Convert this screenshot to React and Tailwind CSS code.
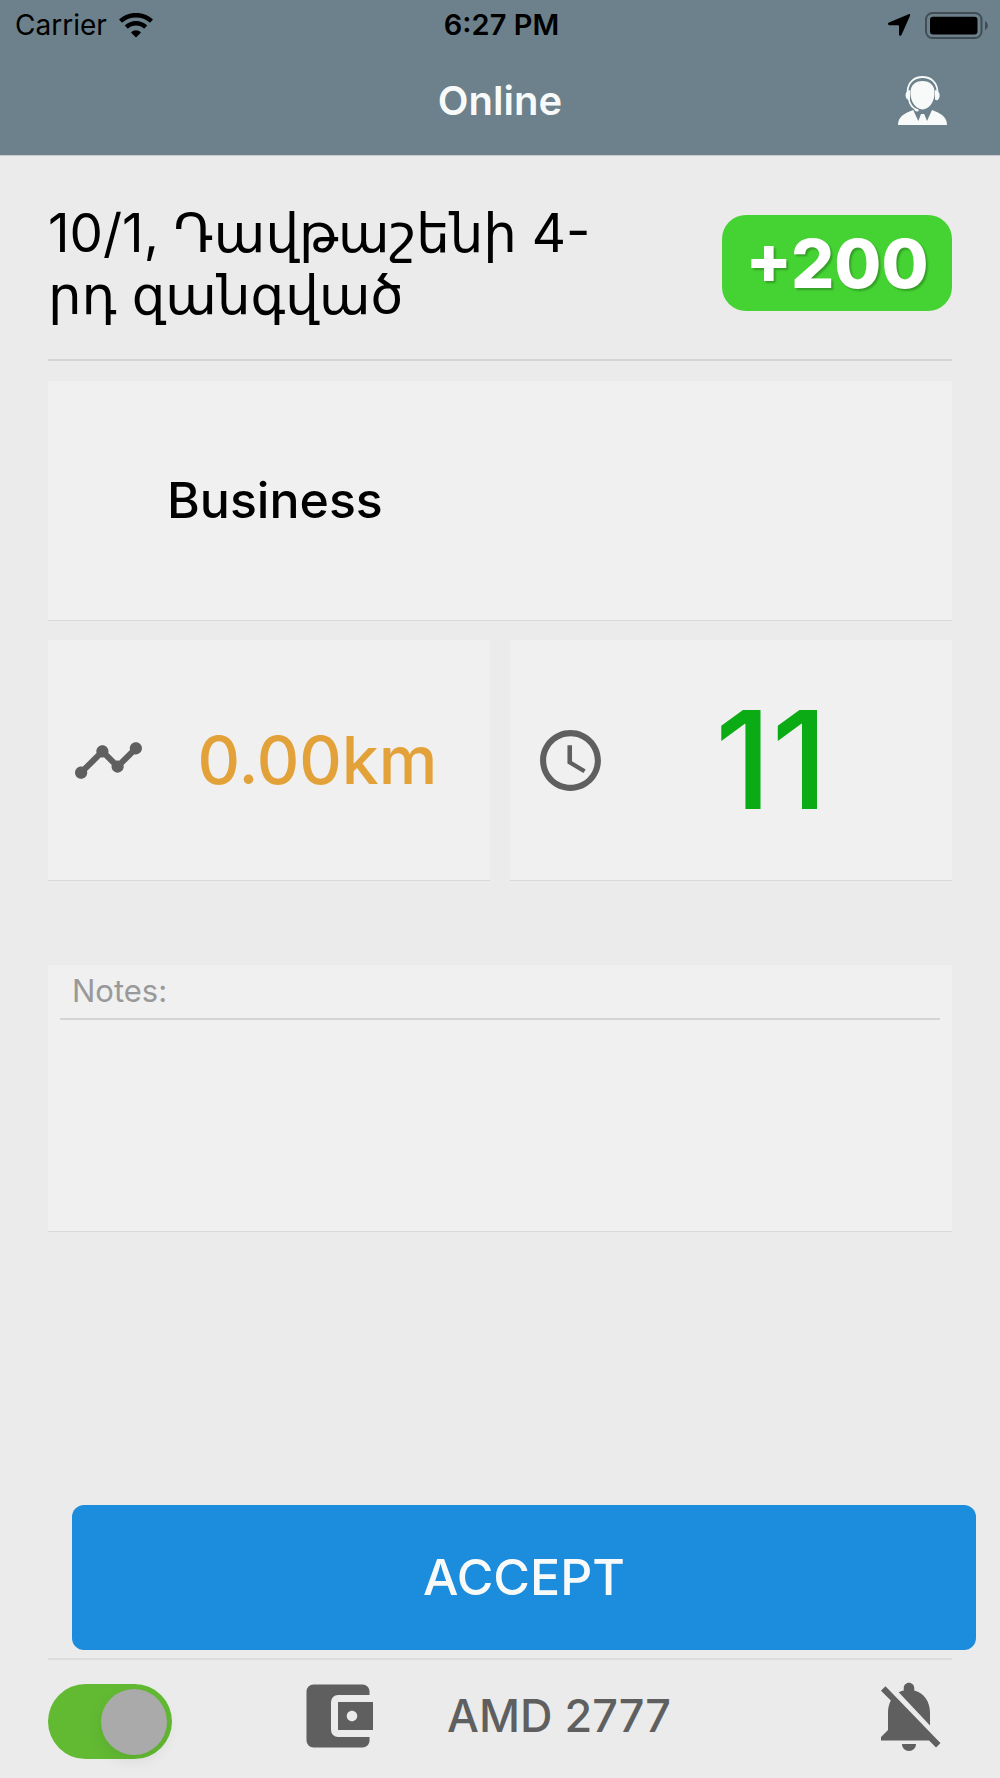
import { useState } from 'react'
import { MdAccessTime, MdAccountBalanceWallet, MdNotificationsOff, MdTimeline } from 'react-icons/md'

const WifiIcon = () => (
  <svg viewBox="0 0 34 25" className="w-[34px] h-[25px]" fill="none" stroke="currentColor" aria-hidden="true">
    <path d="M1.5 8.2C10 0.2 24 0.2 32.5 8.2" strokeWidth="4.6" />
    <path d="M7.3 14.2C12.8 9 21.2 9 26.7 14.2" strokeWidth="4.6" />
    <path d="M12 19.4C14.8 16.6 19.2 16.6 22 19.4L17 24.4Z" fill="currentColor" stroke="none" />
  </svg>
)

const LocationIcon = () => (
  <svg viewBox="0 0 24 24" className="w-6 h-6" fill="currentColor" aria-hidden="true">
    <path d="M21.6 1.2C22.8 0.7 23.5 1.5 23 2.7L14.6 21.8C14 23.2 12 23 12 21.4V12.9C12 12.4 11.8 12.2 11.3 12.2H2.4C0.7 12.2 0.4 10.2 1.9 9.6Z" />
  </svg>
)

const BatteryIcon = () => (
  <svg viewBox="0 0 63 27" className="w-[63px] h-[27px]" aria-hidden="true">
    <rect x="1" y="1" width="55.5" height="25" rx="6.5" fill="none" stroke="#414d54" strokeWidth="2" />
    <rect x="5" y="4.7" width="47.5" height="17.8" rx="3" fill="#000" />
    <path d="M60 9C61.8 10 62.8 11.5 62.8 13.5C62.8 15.5 61.8 17.2 60 18.2Z" fill="#414d54" />
  </svg>
)

const OperatorIcon = () => (
  <svg viewBox="0 0 49 49" className="w-[49px] h-[49px]" fill="currentColor" aria-hidden="true">
    <path d="M24.5 5C32 5 36.6 9.6 36.6 16.5C36.6 26 31 33.4 24.5 33.4S12.4 26 12.4 16.5C12.4 9.6 17 5 24.5 5Z" />
    <path d="M9.5 15.5C10 6.5 16 1 24.5 1S39 6.5 39.5 15.5" fill="none" stroke="currentColor" strokeWidth="1.8" />
    <path d="M12 14.2V24H10.5C8.6 23 7.6 21.5 7.6 19.2C7.6 16.8 8.6 15 10.5 14.2Z" />
    <path d="M37 14.2V23.6C38 24.6 40 24.4 40.6 23C41.2 22.2 41.6 21 41.6 19.2C41.6 16.8 40.4 15 38.5 14.2Z" />
    <path d="M10.8 23C11.6 28 14.2 31.5 18 33.6" fill="none" stroke="currentColor" strokeWidth="1.6" />
    <ellipse cx="18.6" cy="34" rx="2.2" ry="1.4" transform="rotate(15 18.6 34)" />
    <path d="M0 49C0 40.5 6.5 37.3 15.2 34L20.3 45L23 38H26.2L29 45L34 34C42.5 37.3 49 40.5 49 49Z" />
  </svg>
)

const Card = ({ className = '', children }) => (
  <div className={`bg-[#f0f0f0] border-b border-[#d9d9d9] ${className}`}>{children}</div>
)

const Header = () => (
  <header className="bg-[#6c818b] border-b border-[#c9c9d2]">
    <div className="grid grid-cols-3 items-center h-[50px] pl-[15px] pr-3 text-black text-[28px]">
      <div className="flex items-center gap-3">
        <span>Carrier</span>
        <WifiIcon />
      </div>
      <span className="text-center font-semibold text-[29px]">6:27 PM</span>
      <div className="flex items-center justify-end gap-[14px]">
        <LocationIcon />
        <BatteryIcon />
      </div>
    </div>
    <div className="grid grid-cols-3 items-center h-[105px] pb-1 px-12 text-[#f8faf9]">
      <span />
      <h1 className="text-center text-[40px] leading-[48px] font-semibold">Online</h1>
      <button type="button" aria-label="Support" className="justify-self-end mr-[5px]">
        <OperatorIcon />
      </button>
    </div>
  </header>
)

const App = () => {
  const [online, setOnline] = useState(true)

  return (
    <div className="min-h-screen flex flex-col bg-[#ebebeb] text-black font-['Inter','DejaVu_Sans',sans-serif]">
      <Header />

      <main className="flex-1 flex flex-col px-12">
        <section className="flex items-start justify-between gap-6 pt-[46px] pb-[33px] border-b-2 border-[#d4d4d4]">
          <p className="flex-1 max-w-[580px] text-[53px] leading-[62px]">
            10/1, Դավթաշենի 4-<wbr />րդ զանգված
          </p>
          <span className="shrink-0 mt-[13px] w-[230px] h-24 flex items-center justify-center rounded-3xl bg-[#45d333] text-white text-[68px] font-extrabold [text-shadow:2px_2px_2px_rgba(0,0,0,0.25)]">
            +200
          </span>
        </section>

        <Card className="mt-5 h-60 flex items-center pl-[119px]">
          <h2 className="text-[50px] font-medium">Business</h2>
        </Card>

        <div className="mt-[19px] grid grid-cols-2 gap-5">
          <Card className="h-[241px] flex items-center pl-6">
            <MdTimeline className="shrink-0 size-[73px] text-[#5f5f5f]" />
            <span className="flex-1 text-center text-[66px] font-medium text-[#e3a239]">0.00km</span>
          </Card>
          <Card className="h-[241px] flex items-center pl-6 pr-4">
            <MdAccessTime className="shrink-0 size-[73px] text-[#5f5f5f]" />
            <span className="flex-1 text-center text-[136px] leading-none font-medium text-[#0bab16]">11</span>
          </Card>
        </div>

        <Card className="mt-[84px] h-[267px] flex flex-col px-3 border-[#cfcfcf]">
          <label htmlFor="notes" className="h-[55px] flex items-center px-3 border-b-2 border-[#d4d4d4] text-[31px] text-[#999]">
            Notes:
          </label>
          <textarea id="notes" readOnly className="flex-1 resize-none outline-none px-3 py-2 text-[31px]" />
        </Card>

        <button
          type="button"
          className="mt-auto ml-6 -mr-6 h-[145px] shrink-0 rounded-xl bg-[#1c8cdd] text-[#f8faf9] text-[50px] font-medium"
        >
          ACCEPT
        </button>

        <footer className="mt-2 h-[120px] flex items-start border-t-2 border-[#dcdcdc]">
          <label className="mt-6 shrink-0 flex cursor-pointer rounded-full">
            <input
              type="checkbox"
              role="switch"
              aria-label="Online"
              checked={online}
              onChange={() => setOnline(!online)}
              className="peer sr-only"
            />
            <span className="w-[124px] h-[75px] p-[5px] flex items-center rounded-full bg-[#b5b5b5] peer-checked:bg-[#62ba32] peer-checked:justify-end">
              <span className="size-[66px] rounded-full bg-[#aaa] shadow-[0_6px_16px_rgba(0,0,0,0.08)]" />
            </span>
          </label>
          <MdAccountBalanceWallet className="mt-[14px] ml-[124px] shrink-0 size-[84px] text-[#5f5f5f]" />
          <span className="mt-7 ml-[67px] text-[45px] leading-[56px] font-medium text-[#5f5f5f]">AMD 2777</span>
          <button type="button" aria-label="Mute notifications" className="mt-[14px] ml-auto mr-px">
            <MdNotificationsOff className="size-[84px] text-[#5f5f5f]" />
          </button>
        </footer>
      </main>
    </div>
  )
}

export default App
